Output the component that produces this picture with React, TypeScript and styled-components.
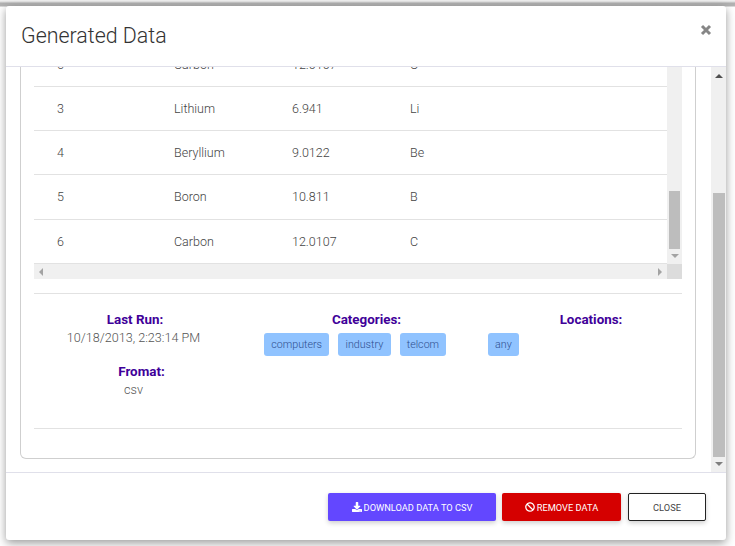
import React from 'react'
import styled, { createGlobalStyle } from 'styled-components'
import { FaBan, FaDownload } from 'react-icons/fa'

type Element = {
    number: string
    name: string
    weight: string
    symbol: string
}

const elements: Array<Element> = [
    { number: '6', name: 'Carbon', weight: '12.0107', symbol: 'C' },
    { number: '3', name: 'Lithium', weight: '6.941', symbol: 'Li' },
    { number: '4', name: 'Beryllium', weight: '9.0122', symbol: 'Be' },
    { number: '5', name: 'Boron', weight: '10.811', symbol: 'B' },
    { number: '6', name: 'Carbon', weight: '12.0107', symbol: 'C' },
]

const GlobalStyle = createGlobalStyle`
    html, body {
        margin: 0;
        padding: 0;
        background: #ffffff;
        overflow: hidden;
    }
    * {
        box-sizing: border-box;
    }
`

const Page = styled.div`
    width: 735px;
    height: 546px;
    padding: 6px 9px 6px 6px;
    font-family: Roboto, sans-serif;
    overflow: hidden;
    opacity: 0.999;
    background: linear-gradient(#f4f4f4 0, #dcdcdc 2px, #b0b0b0 3px, #b4b4b4 6px, #ffffff 7px);
`

const Modal = styled.div`
    width: 720px;
    height: 534px;
    display: flex;
    flex-direction: column;
    background: #ffffff;
    border-radius: 3px;
    box-shadow: 0 3px 10px rgba(0, 0, 0, 0.4);
`

const Header = styled.header`
    height: 61px;
    flex-shrink: 0;
    display: flex;
    justify-content: space-between;
    align-items: flex-start;
    padding: 16px 14px 0 15px;
    border-bottom: 1px solid #e0e0ea;
`

const Title = styled.h1`
    margin: 0;
    font-size: 21.4px;
    line-height: 28px;
    font-weight: 300;
    color: #333333;
`

const CloseIcon = styled.svg`
    width: 12px;
    height: 12px;
    margin-top: 2px;
`

const Body = styled.div`
    height: 405px;
    flex-shrink: 0;
    display: flex;
    overflow: hidden;
`

const Viewport = styled.div`
    width: 705px;
    padding: 0 15px 0 14px;
    overflow: hidden;
`

const Card = styled.section`
    height: 392px;
    padding: 0 13px;
    border: 1px solid #cfcfcf;
    border-top: none;
    border-radius: 0 0 6px 6px;
`

const TableArea = styled.div`
    width: 648px;
    display: grid;
    grid-template-columns: 633px 15px;
    grid-template-rows: 197px 15px;
`

const TableClip = styled.div`
    overflow: hidden;
`

const Rows = styled.div`
    margin-top: -24.3px;
`

const Row = styled.div`
    height: 44.25px;
    display: grid;
    grid-template-columns: 117px 118px 118px 1fr;
    align-items: center;
    padding: 0 0 0.6px 23px;
    border-bottom: 1px solid #e2e2e2;
    font-size: 12.5px;
    font-weight: 300;
    color: #444444;
`

const VerticalTrack = styled.div`
    display: flex;
    flex-direction: column;
    align-items: center;
    background: #f0f0f0;
    padding-top: 124px;
`

const VerticalThumb = styled.div`
    width: 11px;
    height: 58px;
    background: #bdbdbd;
`

const ArrowDown = styled.div<{ $dark?: boolean }>`
    width: 0;
    height: 0;
    margin-top: 5px;
    border-left: 4px solid transparent;
    border-right: 4px solid transparent;
    border-top: 4px solid ${(props) => (props.$dark ? '#7f7f7f' : '#a3a3a3')};
`

const ArrowUp = styled.div`
    width: 0;
    height: 0;
    border-left: 4px solid transparent;
    border-right: 4px solid transparent;
    border-bottom: 4px solid #505050;
`

const HorizontalTrack = styled.div`
    display: flex;
    justify-content: space-between;
    align-items: center;
    padding: 0 5px;
    background: #f0f0f0;
`

const ArrowLeft = styled.div`
    width: 0;
    height: 0;
    border-top: 4px solid transparent;
    border-bottom: 4px solid transparent;
    border-right: 4px solid #a3a3a3;
`

const ArrowRight = styled.div`
    width: 0;
    height: 0;
    border-top: 4px solid transparent;
    border-bottom: 4px solid transparent;
    border-left: 4px solid #a3a3a3;
`

const Corner = styled.div`
    background: #dcdcdc;
`

const Details = styled.div`
    width: 648px;
    height: 136px;
    margin-top: 14px;
    padding-top: 18px;
    display: grid;
    grid-template-columns: 199px 267px 182px;
    grid-template-rows: 52px 1fr;
    border-top: 1px solid #e2e2e2;
    border-bottom: 1px solid #e2e2e2;
`

const DetailColumn = styled.div`
    display: flex;
    flex-direction: column;
    align-items: center;
`

const DetailLabel = styled.div<{ $shift?: number }>`
    margin-left: ${(props) => props.$shift ?? 0}px;
    font-size: 13.4px;
    line-height: 15px;
    font-weight: 700;
    color: #400099;
`

const DetailValue = styled.div`
    margin-top: 3px;
    font-size: 12.6px;
    font-weight: 300;
    line-height: 15px;
    color: #555555;
`

const Tags = styled.div`
    align-self: flex-start;
    display: flex;
    gap: 9px;
    margin: 6px 0 0 31px;
    white-space: nowrap;
`

const Tag = styled.span<{ $offset?: number }>`
    height: 23px;
    padding: 0 7.25px;
    margin-left: ${(props) => props.$offset ?? 0}px;
    display: flex;
    align-items: center;
    font-size: 10.7px;
    font-weight: 300;
    color: #2f4f90;
    background: #90c3ff;
    border-radius: 3px;
`

const OuterTrack = styled.div`
    width: 15px;
    display: flex;
    flex-direction: column;
    align-items: center;
    padding-top: 7px;
    background: #f0f0f0;
`

const OuterThumb = styled.div`
    width: 12px;
    height: 264px;
    margin-top: 115px;
    background: #bdbdbd;
`

const Footer = styled.footer`
    flex: 1;
    display: flex;
    justify-content: flex-end;
    gap: 6px;
    padding: 20px 20px 0 0;
    border-top: 1px solid #e0e0ea;
`

const Button = styled.button<{ $background: string; $color: string; $width: number; $outlined?: boolean }>`
    width: ${(props) => props.$width}px;
    height: 28px;
    padding: 0;
    margin-left: ${(props) => (props.$outlined ? '1px' : '0')};
    display: flex;
    align-items: center;
    justify-content: center;
    gap: 2px;
    font-family: Roboto, sans-serif;
    font-size: 9.25px;
    text-transform: uppercase;
    color: ${(props) => props.$color};
    background: ${(props) => props.$background};
    border: ${(props) => (props.$outlined ? '1px solid #222222' : 'none')};
    border-radius: 2px;
    box-shadow: 0 2px 5px rgba(0, 0, 0, 0.2);

    svg {
        width: 10px;
        height: 10px;
    }
`

const App = (): React.ReactElement => {
    return (
        <Page>
            <GlobalStyle />
            <Modal>
                <Header>
                    <Title>Generated Data</Title>
                    <CloseIcon viewBox="0 0 12 12">
                        <path d="M2 2 L10 10 M10 2 L2 10" stroke="#868686" strokeWidth="3" fill="none" />
                    </CloseIcon>
                </Header>
                <Body>
                    <Viewport>
                        <Card>
                            <TableArea>
                                <TableClip>
                                    <Rows>
                                        {elements.map((element, index) => (
                                            <Row key={index}>
                                                <span>{element.number}</span>
                                                <span>{element.name}</span>
                                                <span>{element.weight}</span>
                                                <span>{element.symbol}</span>
                                            </Row>
                                        ))}
                                    </Rows>
                                </TableClip>
                                <VerticalTrack>
                                    <VerticalThumb />
                                    <ArrowDown />
                                </VerticalTrack>
                                <HorizontalTrack>
                                    <ArrowLeft />
                                    <ArrowRight />
                                </HorizontalTrack>
                                <Corner />
                            </TableArea>
                            <Details>
                                <DetailColumn>
                                    <DetailLabel $shift={3}>Last Run:</DetailLabel>
                                    <DetailValue>10/18/2013, 2:23:14 PM</DetailValue>
                                </DetailColumn>
                                <DetailColumn>
                                    <DetailLabel>Categories:</DetailLabel>
                                    <Tags>
                                        <Tag>computers</Tag>
                                        <Tag>industry</Tag>
                                        <Tag>telcom</Tag>
                                        <Tag $offset={32.5}>any</Tag>
                                    </Tags>
                                </DetailColumn>
                                <DetailColumn>
                                    <DetailLabel>Locations:</DetailLabel>
                                </DetailColumn>
                                <DetailColumn>
                                    <DetailLabel $shift={16}>Fromat:</DetailLabel>
                                    <DetailValue>csv</DetailValue>
                                </DetailColumn>
                            </Details>
                        </Card>
                    </Viewport>
                    <OuterTrack>
                        <ArrowUp />
                        <OuterThumb />
                        <ArrowDown $dark />
                    </OuterTrack>
                </Body>
                <Footer>
                    <Button $background="#6347ff" $color="#ffffff" $width={168}>
                        <FaDownload />
                        Download data to CSV
                    </Button>
                    <Button $background="#d50000" $color="#ffffff" $width={119}>
                        <FaBan />
                        Remove data
                    </Button>
                    <Button $background="#ffffff" $color="#444444" $width={78} $outlined>
                        Close
                    </Button>
                </Footer>
            </Modal>
        </Page>
    )
}

export default App
